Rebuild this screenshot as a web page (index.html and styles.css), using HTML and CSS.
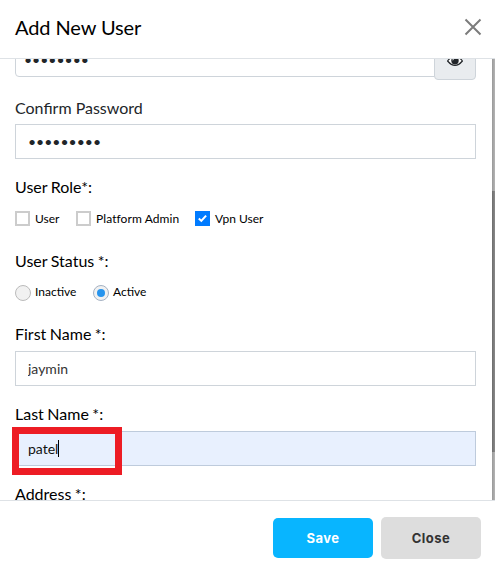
FILE: index.html
```html
<!DOCTYPE html>
<html lang="en">
<head>
<meta charset="utf-8">
<title>Add New User</title>
<link rel="stylesheet" href="styles.css">
</head>
<body>
<div class="modal">
  <header class="modal-header">
    <h1 class="title">Add New User</h1>
    <svg class="close-icon" width="18" height="18" viewBox="0 0 18 18"><path d="M1.5 1.5l15 15M16.5 1.5l-15 15" fill="none" stroke="#7c7c7c" stroke-width="2"/></svg>
  </header>
  <main class="modal-body">
    <form class="form">
      <div class="password-group">
        <input class="field password-field rounded" type="password" value="password">
        <span class="addon"><svg width="16" height="12" viewBox="0 0 16 12"><path d="M.6 6Q8-3.6 15.4 6Q8 14.8.6 6Z" fill="#fff" stroke="#212529" stroke-width="1.2"/><circle cx="8" cy="5.7" r="3.7" fill="#212529"/><path d="M5.8 5.3A2.2 2.2 0 0 1 8 3.2" fill="none" stroke="#fff" stroke-width=".9"/></svg></span>
      </div>
      <label class="label muted">Confirm Password</label>
      <input class="field password-field" type="password" value="password1">
      <div class="label role-label">User Role*:</div>
      <div class="options roles">
        <label class="option user"><span class="check"></span>User</label>
        <label class="option admin"><span class="check"></span>Platform Admin</label>
        <label class="option"><span class="check checked"><svg width="9" height="9" viewBox="0 0 9 9"><path d="M.8 4.6l2.5 2.3L8.1 1.6" fill="none" stroke="#fff" stroke-width="2"/></svg></span>Vpn User</label>
      </div>
      <div class="label status-label">User Status *:</div>
      <div class="options statuses">
        <label class="option inactive"><span class="radio"></span>Inactive</label>
        <label class="option"><span class="radio selected"></span>Active</label>
      </div>
      <label class="label first-label">First Name *:</label>
      <input class="field" type="text" value="jaymin">
      <label class="label last-label">Last Name *:</label>
      <div class="focus-group">
        <input class="field filled" type="text" value="patel">
        <span class="caret"></span>
        <span class="highlight"></span>
      </div>
      <label class="label last-label">Address *:</label>
    </form>
    <div class="scrollbar"><div class="thumb"></div></div>
  </main>
  <footer class="modal-footer">
    <button class="button save">Save</button>
    <button class="button close">Close</button>
  </footer>
</div>
</body>
</html>
```
FILE: styles.css
```css
* { box-sizing: border-box; }
body { margin: 0; background: #fff; color: #000; font-family: Lato, "Liberation Sans", sans-serif; }
.modal { display: flex; flex-direction: column; width: 495px; height: 567px; overflow: hidden; }
.modal-header { display: flex; justify-content: space-between; height: 59px; padding: 18px 13px 0 15px; border-bottom: 1px solid #dee2e6; }
.title { margin: -3px 0 0; font-size: 20px; line-height: 24px; font-weight: 400; letter-spacing: -.1px; }
.close-icon { display: block; }
.modal-body { display: flex; justify-content: space-between; height: 441px; overflow: hidden; }
.form { width: 461px; margin-left: 15px; }
.label { display: block; height: 20px; margin-bottom: 7px; font-size: 16px; line-height: 20px; word-spacing: -.6px; }
.muted { color: #212529; margin-top: 18px; margin-bottom: 6px; word-spacing: 0; }
.field { display: block; width: 100%; height: 35px; padding: 0 12px; border: 1px solid #ced4da; border-radius: 0; outline: 0; background: #fff; color: #333; font: 14px Lato, "Liberation Sans", sans-serif; }
.password-field { color: #212529; }
.password-group { display: flex; height: 39px; margin-top: -18px; }
.password-group .field { flex: 1; height: 36px; padding: 0 8px; }
.rounded { border-radius: 4px 0 0 4px; }
.addon { display: flex; align-items: center; justify-content: center; width: 42px; height: 39px; margin-left: -1px; padding-top: 1px; border: 1px solid #ced4da; border-radius: 0 0 4px 4px; background: #e9ecef; }
.role-label { margin-top: 18px; }
.options { display: flex; font-size: 12px; line-height: 15px; }
.option { display: flex; align-items: center; }
.roles { margin-top: 14px; }
.user { width: 61px; }
.admin { width: 119px; letter-spacing: .08px; }
.check { display: flex; align-items: center; justify-content: center; width: 15px; height: 15px; margin-right: 5px; border: 2px solid #ccc; }
.checked { border: 0; background: #007bff; }
.status-label { margin-top: 25px; }
.statuses { margin-top: 14px; line-height: 14px; }
.option .radio { flex: none; }
.statuses .option { align-items: flex-start; }
.inactive { width: 78px; }
.radio { display: flex; align-items: center; justify-content: center; width: 16px; height: 16px; margin-right: 4px; border: 1px solid #bbb; border-radius: 50%; background: #f1f1f1; }
.selected { border-color: #a5b2c3; }
.selected::after { content: ""; width: 8px; height: 8px; border-radius: 50%; background: #2794ed; }
.first-label { margin-top: 23px; }
.last-label { margin-top: 18px; }
.focus-group { position: relative; }
.filled { background: #e8f0fe; border-color: #becbdc; color: #111; }
.caret { position: absolute; left: 43px; top: 9px; width: 1px; height: 17px; background: #000; }
.highlight { position: absolute; left: -3px; top: -4px; width: 110px; height: 48px; border: 7px solid #ed1c24; }
.scrollbar { width: 3px; background: linear-gradient(90deg, #999, #b5b5b5); }
.thumb { height: 261px; margin-top: 132px; background: linear-gradient(90deg, #6d6d6d, #8a8a8a); }
.modal-footer { display: flex; align-items: center; justify-content: flex-end; gap: 8px; height: 67px; padding: 9px 14px 0 0; border-top: 1px solid #dee2e6; }
.button { width: 100px; height: 40px; padding: 0; border: 0; border-radius: 5px; font: 700 13px Inter, "Liberation Sans", sans-serif; letter-spacing: .5px; }
.save { margin-top: -1px; color: #fff; background: #08b5ff; }
.close { height: 42px; margin-top: -1px; color: #333; background: #ddd; }
```
